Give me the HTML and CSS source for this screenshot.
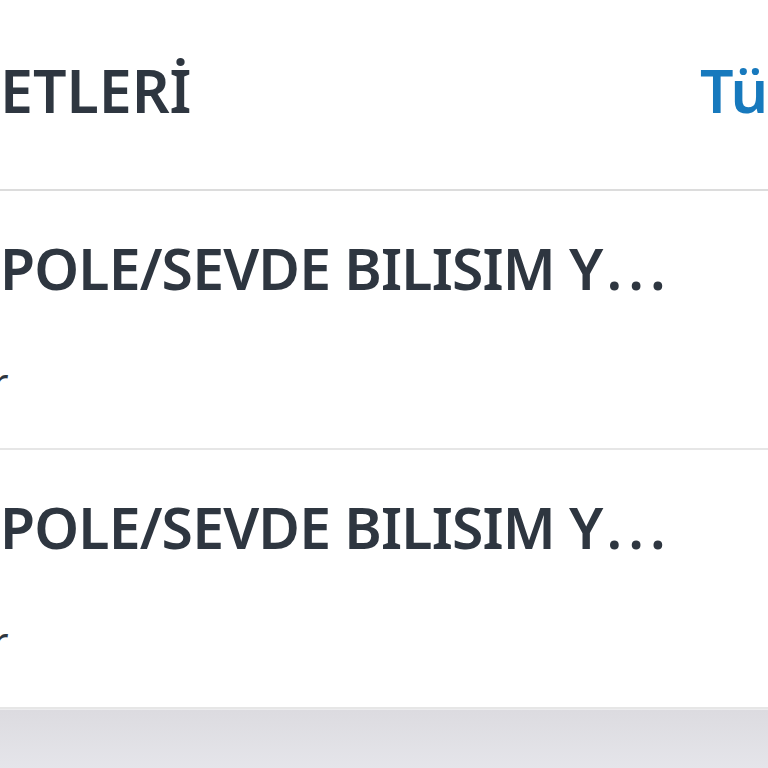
FILE: index.html
```html
<!DOCTYPE html>
<html lang="tr">
<head>
<meta charset="utf-8">
<link rel="stylesheet" href="styles.css">
</head>
<body>
<div class="page">
  <header class="header">
    <h2 class="header-title">ETLERİ</h2>
    <a class="header-link">Tümü</a>
  </header>
  <div class="row">
    <div class="row-title">POLE/SEVDE BILISIM Y<span class="dots">...</span></div>
    <div class="row-sub">r</div>
  </div>
  <div class="row">
    <div class="row-title">POLE/SEVDE BILISIM Y<span class="dots">...</span></div>
    <div class="row-sub">r</div>
  </div>
  <div class="footer"></div>
</div>
</body>
</html>
```
FILE: styles.css
```css
html, body {
  margin: 0;
  padding: 0;
  background: #ffffff;
  overflow: hidden;
}
.page {
  width: 768px;
  height: 768px;
  display: flex;
  flex-direction: column;
  overflow: hidden;
  font-family: "Noto Sans", "Open Sans", sans-serif;
  color: #2e3640;
}
.header {
  height: 189px;
  flex: 0 0 auto;
  display: flex;
  align-items: flex-start;
  border-bottom: 2px solid #dcdcdc;
  box-sizing: content-box;
}
.header-title {
  flex: 0 0 700px;
  margin: 0;
  padding-top: 50px;
  font-size: 59px;
  font-weight: 600;
  line-height: 80px;
  white-space: nowrap;
}
.header-link {
  padding-top: 50px;
  font-size: 59px;
  font-weight: 600;
  line-height: 80px;
  color: #1779bd;
  white-space: nowrap;
}
.row {
  height: 257px;
  flex: 0 0 auto;
  border-bottom: 2px solid #e6e6e6;
  box-sizing: content-box;
}
.row-title {
  padding-top: 37px;
  font-size: 57px;
  font-weight: 600;
  line-height: 80px;
  letter-spacing: -0.8px;
  white-space: nowrap;
}
.dots {
  letter-spacing: 6px;
  margin-left: 4px;
}
.row-sub {
  margin-left: -8px;
  margin-top: 49px;
  font-size: 40px;
  line-height: 50px;
  color: #2e3640;
}
.row:last-of-type {
  border-bottom: none;
}
.footer {
  flex: 1 1 auto;
  background: linear-gradient(#dcdbe0, #e5e5ea);
  border-top: 1px solid #ececee;
}
```
